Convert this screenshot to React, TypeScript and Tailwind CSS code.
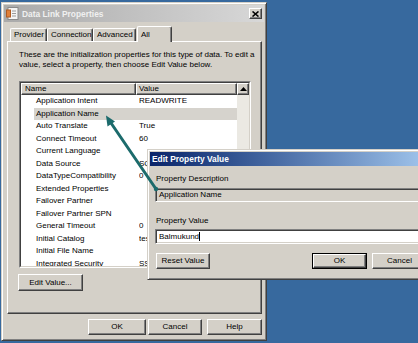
import React from 'react';

const raised =
  'border border-t-white border-l-white border-r-[#404040] border-b-[#404040] shadow-[inset_-1px_-1px_#808080]';
const sunken =
  'border border-t-[#808080] border-l-[#808080] border-r-white border-b-white shadow-[inset_1px_1px_#404040,inset_-1px_-1px_#d4d0c8]';

const rows: [string, string][] = [
  ['Application Intent', 'READWRITE'],
  ['Application Name', ''],
  ['Auto Translate', 'True'],
  ['Connect Timeout', '60'],
  ['Current Language', ''],
  ['Data Source', 'SQLEXPRESS'],
  ['DataTypeCompatibility', '0'],
  ['Extended Properties', ''],
  ['Failover Partner', ''],
  ['Failover Partner SPN', ''],
  ['General Timeout', '0'],
  ['Initial Catalog', 'testdb'],
  ['Initial File Name', ''],
  ['Integrated Security', 'SSPI'],
];

function Button({ label, className, primary }: { label: string; className: string; primary?: boolean }) {
  if (primary) {
    return (
      <div className={`border border-black ${className}`}>
        <div className={`${raised} bg-[#d4d0c8] h-full flex items-center justify-center`}>{label}</div>
      </div>
    );
  }
  return (
    <div className={`${raised} bg-[#d4d0c8] flex items-center justify-center ${className}`}>{label}</div>
  );
}

function Tab({ label, className, selected }: { label: string; className: string; selected?: boolean }) {
  return (
    <div
      className={`border-t border-l border-t-white border-l-white border-r border-r-[#404040] shadow-[inset_-1px_0_#808080] rounded-tl-[2px] rounded-tr-[2px] bg-[#d4d0c8] flex items-center pl-[3px] ${
        selected ? 'h-[16px] -mb-px relative z-10' : 'h-[13px]'
      } ${className}`}
    >
      {label}
    </div>
  );
}

export default function App() {
  return (
    <div className="w-[418px] h-[343px] bg-[#37699e] relative overflow-hidden font-['Liberation_Sans',Arial,sans-serif] text-[8px] leading-[10px] text-black pl-px pt-[2px]">
      {/* Data Link Properties window */}
      <div className="w-[266px] h-[339px] bg-[#d4d0c8] border border-t-[#d4d0c8] border-l-[#d4d0c8] border-r-[#404040] border-b-[#404040] shadow-[inset_1px_1px_white,inset_-1px_-1px_#808080] px-px pt-px flex flex-col">
        <div className="h-[17px] mx-px mt-px bg-gradient-to-r from-[#aaaaaa] to-[#d8d8d8] flex items-center pl-[2px] pr-[2px]">
          <svg width="13" height="13" viewBox="0 0 13 13">
            <rect x="2" y="0.5" width="10" height="12" fill="#f4f4f4" stroke="#8a8a8a" />
            <rect x="0.5" y="3" width="4" height="7" fill="#e0803a" stroke="#b05a20" />
            <line x1="6" y1="4" x2="10" y2="4" stroke="#9a9a9a" />
            <line x1="6" y1="6.5" x2="10" y2="6.5" stroke="#9a9a9a" />
            <line x1="6" y1="9" x2="10" y2="9" stroke="#9a9a9a" />
          </svg>
          <span className="ml-[3px] font-bold text-[8.4px] text-[#f0f0f0]">Data Link Properties</span>
          <div className={`${raised} ml-auto w-[13px] h-[11px] bg-[#d4d0c8] flex items-center justify-center`}>
            <svg width="7" height="6" viewBox="0 0 7 6">
              <path d="M0.5 0.5 L6.5 5.5 M6.5 0.5 L0.5 5.5" stroke="black" strokeWidth="1.6" />
            </svg>
          </div>
        </div>

        {/* tabs */}
        <div className="mt-[4px] ml-[7px] flex items-end h-[15px]">
          <Tab label="Provider" className="w-[37px]" />
          <Tab label="Connection" className="w-[46px]" />
          <Tab label="Advanced" className="w-[43px]" />
          <Tab label="All" className="w-[35px] ml-px" selected />
        </div>

        {/* tab panel */}
        <div className={`${raised} ml-[4px] w-[255px] h-[273px] pl-[11px] pt-[8px]`}>
          <div className="whitespace-nowrap">
            These are the initialization properties for this type of data. To edit a
            <br />
            value, select a property, then choose Edit Value below.
          </div>

          <div className="mt-[11px] w-[232px] h-[187px] border border-t-[#808080] border-l-[#808080] border-r-white border-b-white">
            <div className="h-full border border-t-[#404040] border-l-[#404040] border-r-[#d4d0c8] border-b-[#d4d0c8] bg-white flex overflow-hidden">
              <div className="flex-1 flex flex-col">
                <div className="h-[13px] flex bg-[#d4d0c8]">
                  <div className={`${raised} w-[115px] pl-[3px] flex items-center`}>Name</div>
                  <div className={`${raised} flex-1 pl-[2px] flex items-center`}>Value</div>
                </div>
                {rows.map(([name, value], i) => (
                  <div
                    key={name}
                    className={`h-[12.5px] shrink-0 ml-[13px] flex items-center ${i === 1 ? 'bg-[#d6d3cd]' : ''}`}
                  >
                    <div className="w-[102px] pl-[2px] whitespace-nowrap">{name}</div>
                    <div className={`ml-[3px] whitespace-nowrap ${i >= 4 ? 'w-[8px] overflow-hidden' : ''}`}>
                      {value}
                    </div>
                  </div>
                ))}
              </div>
              <div className="w-[12px] flex flex-col bg-[#ebe9e3]">
                <div className={`${raised} h-[12px] bg-[#d4d0c8] flex items-center justify-center`}>
                  <svg width="7" height="4" viewBox="0 0 7 4">
                    <path d="M3.5 0 L7 4 L0 4 Z" fill="black" />
                  </svg>
                </div>
              </div>
            </div>
          </div>

          <Button label="Edit Value..." className="mt-[6px] -ml-px w-[65px] h-[17px]" />
        </div>

        {/* bottom buttons */}
        <div className="mt-[5px] flex h-[16px] pl-[85px]">
          <Button label="OK" className="w-[58px]" />
          <Button label="Cancel" className="w-[54px] ml-[2px]" />
          <Button label="Help" className="w-[55px] ml-[5px]" />
        </div>
      </div>

      {/* Edit Property Value dialog */}
      <div className="absolute left-[147px] top-[149px] w-[290px] h-[131px] bg-[#d4d0c8] border border-t-[#d4d0c8] border-l-[#d4d0c8] border-r-[#404040] border-b-[#404040] shadow-[inset_1px_1px_white,inset_-1px_-1px_#808080] p-px flex flex-col z-20">
        <div className="h-[14px] mt-px ml-px bg-gradient-to-r from-[#0a246a] to-[#a6caf0] flex items-center pl-[2px]">
          <span className="font-bold text-[8.4px] text-white">Edit Property Value</span>
        </div>
        <div className="pl-[7px] flex flex-col">
          <div className="mt-[8px]">Property Description</div>
          <div className={`${sunken} mt-[4px] -ml-px h-[14px] bg-[#d4d0c8] flex items-center pl-[3px]`}>
            Application Name
          </div>
          <div className="mt-[14px]">Property Value</div>
          <div className={`${sunken} mt-[3px] -ml-px h-[15px] bg-white flex items-center pl-[3px]`}>
            Balmukund<span className="inline-block w-px h-[9px] bg-black" />
          </div>
          <div className="mt-[9px] flex h-[16px]">
            <Button label="Reset Value" className="w-[54px]" />
            <Button label="OK" className="w-[55px] ml-[102px]" primary />
            <Button label="Cancel" className="w-[55px] ml-[5px]" />
          </div>
        </div>
      </div>

      {/* callout arrow */}
      <svg className="absolute left-0 top-0 z-30 pointer-events-none" width="418" height="343" viewBox="0 0 418 343">
        <line x1="111" y1="123" x2="156" y2="189" stroke="#1c6b6c" strokeWidth="3" strokeLinecap="round" />
        <circle cx="156" cy="189" r="2.2" fill="#1c6b6c" />
        <polygon points="106,115.5 115,121.5 107.5,126.5" fill="#1c6b6c" />
      </svg>
    </div>
  );
}
